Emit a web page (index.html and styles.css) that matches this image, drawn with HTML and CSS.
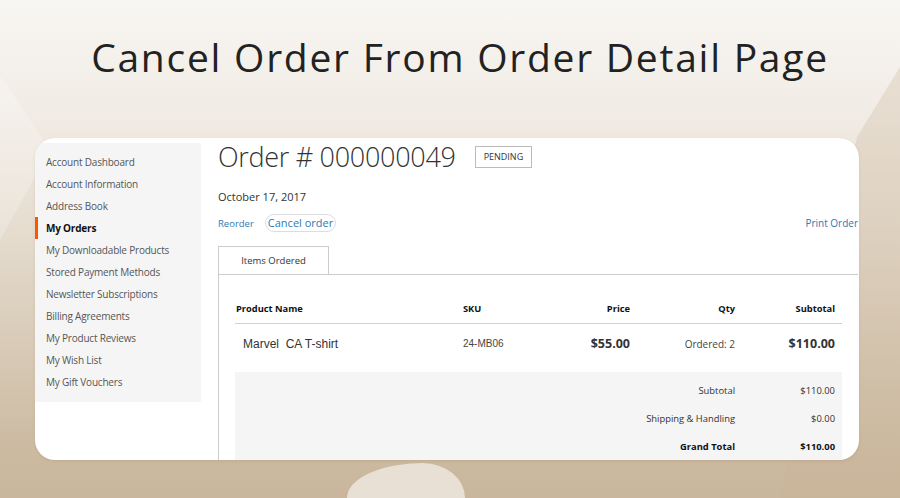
FILE: index.html
```html
<!DOCTYPE html>
<html lang="en">
  <head>
    <meta charset="utf-8">
    <title>Cancel Order From Order Detail Page</title>
    <link rel="stylesheet" href="styles.css">
  </head>
  <body>
    <!-- background facets -->
    <div class="facet facet-right"></div>
    <div class="facet facet-left"></div>
    <div class="blob"></div>

    <h1 class="banner-title">Cancel Order From Order Detail Page</h1>

    <div class="card">

      <!-- Account navigation -->
      <ul class="account-nav">
        <li><a href="#">Account Dashboard</a></li>
        <li><a href="#">Account Information</a></li>
        <li><a href="#">Address Book</a></li>
        <li class="current"><a href="#">My Orders</a></li>
        <li><a href="#">My Downloadable Products</a></li>
        <li><a href="#">Stored Payment Methods</a></li>
        <li><a href="#">Newsletter Subscriptions</a></li>
        <li><a href="#">Billing Agreements</a></li>
        <li><a href="#">My Product Reviews</a></li>
        <li><a href="#">My Wish List</a></li>
        <li><a href="#">My Gift Vouchers</a></li>
      </ul>

      <!-- Order view -->
      <div class="order-main">
        <div class="order-head">
          <span class="order-title">Order # 000000049</span>
          <span class="order-status">Pending</span>
        </div>
        <div class="order-date">October 17, 2017</div>

        <div class="order-actions">
          <a href="#" class="action-link">Reorder</a>
          <a href="#" class="action-cancel">Cancel order</a>
          <a href="#" class="action-link action-print">Print Order</a>
        </div>

        <div class="tabs">
          <div class="tab active">Items Ordered</div>
        </div>

        <div class="tab-content">
          <div class="items-grid items-head">
            <div>Product Name</div>
            <div>SKU</div>
            <div class="num">Price</div>
            <div class="num">Qty</div>
            <div class="num">Subtotal</div>
          </div>
          <div class="items-grid items-row">
            <div class="product-name">Marvel&nbsp; CA T-shirt</div>
            <div class="sku">24-MB06</div>
            <div class="num price">$55.00</div>
            <div class="num qty">Ordered: 2</div>
            <div class="num price">$110.00</div>
          </div>

          <div class="totals">
            <div class="totals-row">
              <span>Subtotal</span>
              <span>$110.00</span>
            </div>
            <div class="totals-row">
              <span>Shipping &amp; Handling</span>
              <span>$0.00</span>
            </div>
            <div class="totals-row grand">
              <span>Grand Total</span>
              <span>$110.00</span>
            </div>
          </div>
        </div>
      </div>

    </div>
  </body>
</html>
```

FILE: styles.css
```css
/* Page and background */
html {
  height: 100%;
  overflow: hidden;
}

body {
  margin: 0;
  width: 900px;
  height: 498px;
  overflow: hidden;
  position: relative;
  font-family: "Open Sans", "Noto Sans", sans-serif;
  color: #333;
  background: linear-gradient(180deg, #f8f6f3 0%, #f1ece5 22%, #e6ddd0 45%, #d6c8b4 72%, #cbb9a0 92%, #c9b69c 100%);
}

.facet {
  position: absolute;
  z-index: 0;
}

.facet-right {
  top: 0;
  right: 0;
  width: 180px;
  height: 498px;
  background: rgba(200, 180, 150, 0.28);
  clip-path: polygon(137px 137px, 180px 67px, 180px 498px, 60px 498px);
}

.facet-left {
  top: 0;
  left: 0;
  width: 180px;
  height: 498px;
  background: rgba(255, 255, 255, 0.22);
  clip-path: polygon(0 75px, 50px 150px, 0 240px);
}

.blob {
  left: 347px;
  top: 463px;
  width: 118px;
  height: 35px;
  position: absolute;
  background: #e8e0d4;
  border-radius: 64% 36% 0 0 / 100% 100% 0 0;
}

/* Banner title */
.banner-title {
  position: relative;
  z-index: 1;
  margin: 0;
  padding-top: 31px;
  height: 107px;
  box-sizing: border-box;
  text-align: center;
  font-size: 39px;
  line-height: 52px;
  font-weight: 400;
  letter-spacing: 1.75px;
  color: #222;
  padding-left: 20px;
}

/* White card */
.card {
  position: relative;
  z-index: 1;
  margin: 31px 0 0 35px;
  width: 824px;
  height: 322px;
  background: #fff;
  border-radius: 20px;
  overflow: hidden;
  display: flex;
  box-shadow: 0 1px 3px rgba(120, 100, 70, 0.15);
}

/* Account navigation */
.account-nav {
  list-style: none;
  margin: 5px 0 0;
  padding: 8px 0 9px;
  width: 166px;
  flex: none;
  align-self: flex-start;
  background: #f5f5f5;
}

.account-nav li {
  line-height: 22px;
  font-size: 10px;
  letter-spacing: -0.2px;
  border-left: 3px solid transparent;
  padding-left: 8px;
}

.account-nav a {
  color: #555;
  text-decoration: none;
}

.account-nav li.current {
  border-left-color: #ff5501;
}

.account-nav li.current a {
  color: #111;
  font-weight: 700;
}

/* Order view */
.order-main {
  flex: none;
  width: 640px;
  margin-left: 17px;
  padding-top: 1px;
}

.order-head {
  display: flex;
  align-items: center;
  height: 36px;
}

.order-title {
  font-size: 27px;
  font-weight: 300;
  line-height: 36px;
  letter-spacing: -0.3px;
  color: #333;
}

.order-status {
  margin-left: 19px;
  border: 1px solid #bbb;
  padding: 0 8px;
  height: 20px;
  line-height: 20px;
  font-size: 9px;
  text-transform: uppercase;
  color: #333;
}

.order-date {
  margin-top: 13px;
  font-size: 11px;
  line-height: 18px;
}

.order-actions {
  margin-top: 8px;
  display: flex;
  align-items: center;
  height: 18px;
}

.action-link {
  font-size: 9.5px;
  color: #2f79b3;
  text-decoration: none;
}

.action-cancel {
  margin-left: 11px;
  font-size: 11px;
  color: #2f79b3;
  text-decoration: none;
  border: 1px solid #ddd;
  border-radius: 9px;
  padding: 0 2px;
  line-height: 16px;
}

.action-print {
  margin-left: auto;
  font-size: 10px;
}

/* Tabs */
.tabs {
  margin-top: 14px;
  display: flex;
}

.tab {
  width: 111px;
  height: 28px;
  line-height: 28px;
  box-sizing: border-box;
  border: 1px solid #ccc;
  border-bottom: none;
  text-align: center;
  font-size: 9.5px;
  color: #333;
  background: #fff;
}

.tab-content {
  border-left: 1px solid #ccc;
  border-top: 1px solid #ccc;
  margin-top: 0;
  padding: 20px 0 0 16px;
  height: 200px;
}

.tab-content .items-grid,
.tab-content .totals {
  width: 607px;
}

.items-grid {
  display: grid;
  grid-template-columns: 228px 67px 100px 105px 100px;
  padding-right: 7px;
  box-sizing: border-box;
  align-items: center;
}

.items-grid .num {
  text-align: right;
}

.items-head {
  font-size: 9.3px;
  font-weight: 700;
  line-height: 14px;
  padding-top: 7px;
  padding-bottom: 7px;
  border-bottom: 1px solid #d1d1d1;
  color: #111;
}

.items-head > div:first-child {
  padding-left: 1px;
}

.items-row {
  height: 40px;
  line-height: 18px;
}

.product-name {
  font-family: "Liberation Sans", Arial, sans-serif;
  font-size: 12px;
  color: #333;
  padding-left: 8px;
}

.sku {
  font-family: "Liberation Sans", Arial, sans-serif;
  font-size: 10px;
  color: #444;
}

.price {
  font-size: 12.5px;
  font-weight: 700;
  color: #333;
}

.qty {
  font-size: 10px;
  color: #444;
}

/* Totals */
.totals {
  margin-top: 8px;
  background: #f5f5f5;
  padding: 5px 7px 6px 0;
  box-sizing: border-box;
}

.totals-row {
  display: grid;
  grid-template-columns: 1fr 100px;
  height: 28px;
  line-height: 28px;
  font-size: 9.4px;
  text-align: right;
  color: #333;
}

.totals-row.grand {
  font-weight: 700;
  color: #111;
}
```
